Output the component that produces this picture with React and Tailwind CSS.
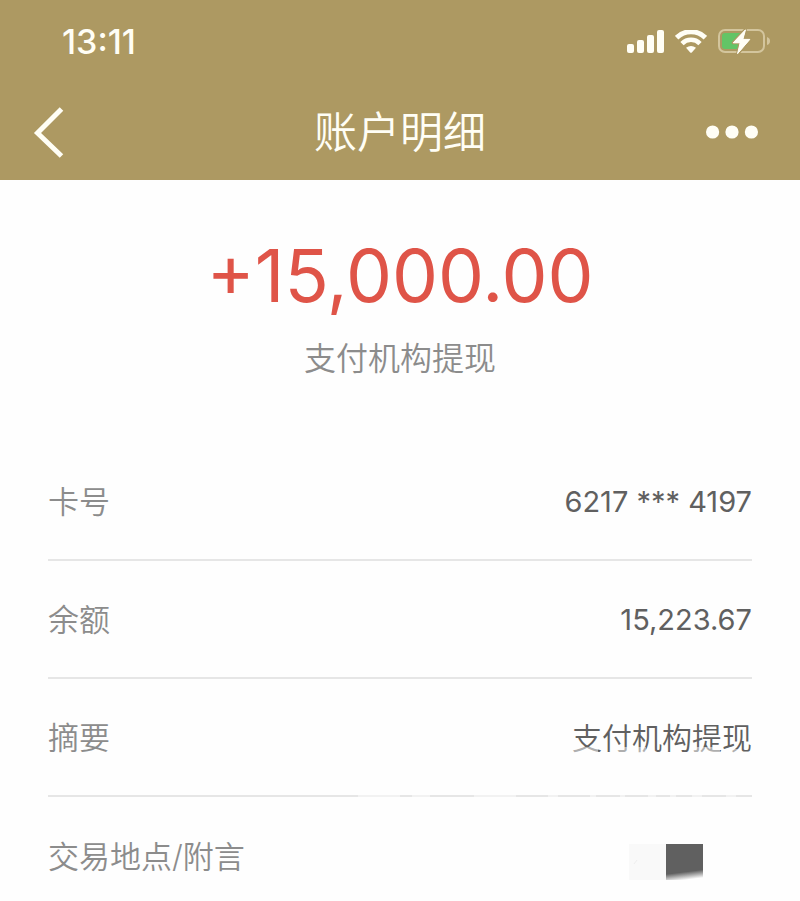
import React from 'react';

const details = [
  { label: '卡号', value: '6217 *** 4197', size: 'text-[29px] font-normal' },
  { label: '余额', value: '15,223.67', size: 'text-[29px] font-normal' },
  { label: '摘要', value: '支付机构提现', size: 'text-[30px] font-[350]', worn: true },
  { label: '交易地点/附言', redacted: true },
];

const SignalIcon = () => (
  <svg className="w-[37px] h-6" viewBox="0 0 37 24" fill="currentColor" aria-hidden="true">
    <rect x="0" y="14" width="7" height="9" rx="2" />
    <rect x="10" y="10" width="7" height="13" rx="2" />
    <rect x="20" y="5" width="7" height="18" rx="2" />
    <rect x="30" y="0" width="7" height="23" rx="2" />
  </svg>
);

const WifiIcon = () => (
  <svg className="w-8 h-6" viewBox="0 0 32 24" fill="none" stroke="currentColor" aria-hidden="true">
    <path d="M1.6 7.6 A20.6 20.6 0 0 1 30.4 7.6" strokeWidth="5" />
    <path d="M7 13.6 A12.6 12.6 0 0 1 25 13.6" strokeWidth="4.6" />
    <path d="M11 17.8 Q16 14.4 21 17.8 L16.8 22.4 Q16 23.2 15.2 22.4 Z" fill="currentColor" stroke="none" />
  </svg>
);

const BatteryIcon = () => (
  <svg className="w-[52px] h-[26px]" viewBox="0 0 52 26" aria-hidden="true">
    <rect x="1" y="1" width="45" height="22" rx="6" fill="none" stroke="#d3c59d" strokeWidth="2" />
    <path d="M49 8 Q52 9 52 12 Q52 15 49 16 Z" fill="#d3c59d" />
    <path d="M7 4 H23 V20 H7 Q4 20 4 17 V7 Q4 4 7 4 Z" fill="#63c466" />
    <path
      d="M27.5 0.5 L15.2 13.8 H22 L19.5 25 L31.8 10.4 H25 Z"
      fill="#fffef5"
      stroke="#ad9962"
      strokeWidth="3"
      strokeLinejoin="round"
      paintOrder="stroke"
    />
    <path d="M27.5 0.8 L15.2 13.8 H22.2 L19.6 24.6 L31.8 10.4 H24.8 Z" fill="#fffef5" stroke="#fffef5" strokeLinejoin="round" />
  </svg>
);

// Grey block that hides the transaction place
const Redaction = () => (
  <svg className="mt-2.5 mr-[49px] h-9 w-[74px]" viewBox="0 0 74 36" role="img" aria-label="已隐藏">
    <defs>
      <linearGradient id="edge" gradientUnits="userSpaceOnUse" x1="55" y1="28" x2="56" y2="36">
        <stop offset="0" stopColor="#606060" />
        <stop offset="1" stopColor="#fefefe" />
      </linearGradient>
    </defs>
    <rect width="37" height="36" fill="#f9f9f9" />
    <path d="M5 20 L8 16" stroke="#eeeeee" />
    <rect x="37" width="37" height="36" fill="url(#edge)" />
  </svg>
);

// Pale strokes along the foot of the summary text and over the rule below it
const WornEdge = () => (
  <svg className="absolute right-0 top-[31px] h-[51px] w-[394px]" viewBox="0 0 394 51" fill="#fefefe" fillOpacity="0.5" aria-hidden="true">
    <rect x="212" y="0" width="28" height="8" />
    <rect x="260" y="0" width="12" height="5" />
    <rect x="278" y="0" width="10" height="8" />
    <rect x="334" y="0" width="28" height="8" />
    <rect x="366" y="2" width="14" height="6" />
    <path d="M0 48h42v3H0zM54 48h18v3H54zM116 48h42v3h-42zM190 48h10v3h-10zM232 48h6v3h-6zM262 48h5v3h-5zM290 48h8v3h-8zM312 48h6v3h-6zM334 48h10v3h-10zM368 48h10v3h-10z" />
  </svg>
);

export default function App() {
  return (
    <div className="min-h-screen bg-[#fefefe] font-[Inter,'Noto_Sans_CJK_SC',sans-serif]">
      {/* HEADER */}
      <header className="bg-[#ad9962] text-[#fffef5]">
        <div className="flex h-[84px] items-center justify-between pl-[62px] pr-[30px]">
          <time className="text-[34px] font-medium leading-10">13:11</time>
          <div className="flex items-center gap-[11px]">
            <SignalIcon />
            <WifiIcon />
            <BatteryIcon />
          </div>
        </div>

        <div className="grid h-24 grid-cols-[1fr_auto_1fr] items-center pl-8 pr-[42px]">
          <button type="button" aria-label="返回" className="justify-self-start">
            <svg className="h-[52px] w-8" viewBox="0 0 32 52" fill="none" stroke="currentColor" strokeWidth="5">
              <path d="M29.5 3 L5.5 27 L29.5 50" />
            </svg>
          </button>
          <h1 className="ml-2.5 text-[43px] font-[350] leading-[60px]">账户明细</h1>
          <button type="button" aria-label="更多" className="justify-self-end">
            <svg className="h-[14px] w-[52px]" viewBox="0 0 52 14" fill="currentColor">
              <circle cx="6.6" cy="7" r="6.6" />
              <circle cx="26" cy="7" r="6.6" />
              <circle cx="45.4" cy="7" r="6.6" />
            </svg>
          </button>
        </div>
      </header>

      <main className="px-12">
        {/* AMOUNT */}
        <section className="flex flex-col items-center pb-[60px] pt-12 text-center">
          <p className="text-[73px] leading-[95px] text-[#df5448]">+15,000.00</p>
          <p className="mt-3 text-[32px] font-[350] leading-[48px] text-[#8c8c8c]">支付机构提现</p>
        </section>

        {/* DETAILS */}
        <dl>
          {details.map(({ label, value, size, worn, redacted }) => (
            <div
              key={label}
              className="flex items-center justify-between border-b-2 border-[#e6e6e6] pb-[35px] pt-[37px] leading-[44px] last:border-b-0"
            >
              <dt className="text-[31px] font-[350] text-[#8c8c8c]">{label}</dt>
              <dd className={`relative text-[#606060] ${size ?? ''}`}>
                {redacted ? <Redaction /> : value}
                {worn && <WornEdge />}
              </dd>
            </div>
          ))}
        </dl>
      </main>
    </div>
  );
}
